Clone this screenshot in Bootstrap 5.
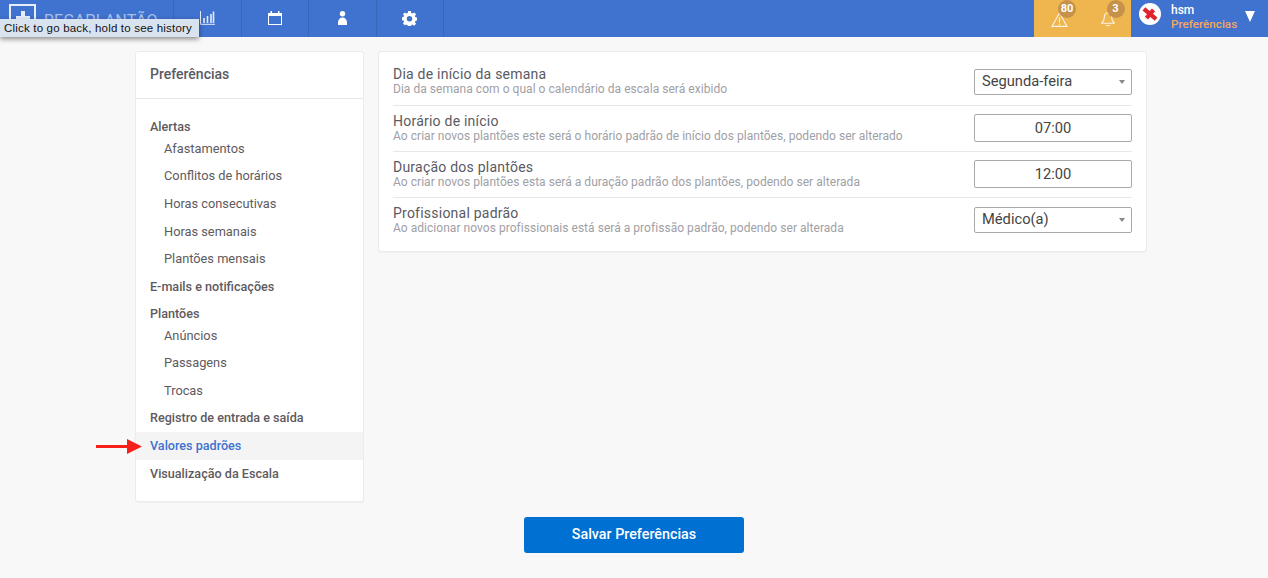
<!DOCTYPE html>
<html lang="pt-BR">
<head>
<meta charset="utf-8">
<title>Preferências</title>
<link href="https://cdn.jsdelivr.net/npm/bootstrap@5.3.0/dist/css/bootstrap.min.css" rel="stylesheet">
<style>
html,body{height:578px;overflow:hidden}
body{background:#f8f8f8;font-family:Roboto,"Liberation Sans",sans-serif;color:#5a5a62;position:relative}
.topbar{height:37px;background:#4072cf}
.brand-box{width:173px;height:37px;padding-left:9px;gap:8px;overflow:hidden;color:#a9c0ea;font-size:16px;letter-spacing:.25px;white-space:nowrap}
.brand-mark{width:27px;height:27px;border:2.5px solid #e8eef9;color:#fff;background:#4072cf;margin-top:-2px;flex:none}
.brand-text{font-weight:400;line-height:37px;padding-top:4px}
.top-item{width:67.5px;height:37px;border-left:1px solid #3866ba;color:#fff}
.top-item.last-sep{border-right:1px solid #3866ba;width:68px}
.top-item svg{margin-bottom:1px}
.alert-zone{width:97px;height:37px;background:#efb54e;position:relative}
.alert-cell{width:48.5px;position:relative}
.count-dot{position:absolute;top:0;width:18px;height:18px;border-radius:50%;background:#c6924a;color:#fff;font-size:11px;font-weight:700;line-height:18px;text-align:center}
.alert-glyph{position:absolute;top:12px;opacity:.85}
.user-zone{width:137px;height:37px;padding-left:8px;color:#fff}
.user-logo{width:22px;height:22px;flex:none;margin-bottom:9px}
.user-text{margin-left:10px;margin-bottom:2px}
.user-name{font-size:12px;font-weight:500;line-height:13px;color:#fff}
.user-sub{font-size:11.7px;font-weight:500;line-height:14px;color:#f5a85a}
.user-caret{width:0;height:0;border-left:5.5px solid transparent;border-right:5.5px solid transparent;border-top:11px solid #fff;margin-left:8px;margin-bottom:5px}
.back-tip{position:absolute;left:0;top:19px;width:199px;height:18px;background:#d9e3f0;color:#111;font-size:11.5px;line-height:18px;padding-left:4px;white-space:nowrap;font-family:"Liberation Sans",sans-serif;box-shadow:0 2px 5px rgba(0,0,0,.45);letter-spacing:.19px}
.page-wrap{width:1012px;margin:14px 0 0 135px;gap:14px}
.side-panel{width:229px;height:451px;background:#fff;border:1px solid #ebebeb;border-radius:3px;box-shadow:0 1px 1px rgba(0,0,0,.03);flex:none}
.side-title{height:47px;border-bottom:1px solid #e6e6e6;font-size:14px;font-weight:500;line-height:45px;padding-left:14px;color:#5a5a62;margin:0}
.side-list{padding:14.15px 0 0;margin:0;list-style:none}
.side-link{display:block;height:27.6px;line-height:27.6px;padding-left:14px;font-size:12.6px;font-weight:500;color:#5e5a5e;text-decoration:none;white-space:nowrap}
.side-link.sub{padding-left:28px;font-weight:400;font-size:12.8px}
.side-link.sub.first{margin-top:-6px}
.side-link.sub.first.later{margin-top:-6.3px}
.side-link.on{background:#f4f4f4;color:#4072cf}
.main-panel{width:769px;height:201px;background:#fff;border:1px solid #ebebeb;border-radius:3px;padding:8px 14px 0;box-shadow:0 1px 1px rgba(0,0,0,.03)}
.pref-row{height:46px;border-bottom:1px solid #e8e8e8;padding-bottom:2px}
.pref-row:first-child{height:46px}
.pref-row:first-child .pref-copy{margin-bottom:2px}
.pref-row:last-child{border-bottom:0}
.pref-name{font-size:14px;line-height:16px;color:#5a5a62;letter-spacing:.23px}
.pref-help{font-size:12px;line-height:14px;color:#a0a0a6;letter-spacing:.04px}
.pref-box{width:158px;height:28px;flex:none;border:1px solid #a9a9a9;border-radius:2px;font-size:14.7px;color:#444;padding:0 7px;box-shadow:none;font-family:Roboto,sans-serif;line-height:1.2}
.pref-box:focus{border-color:#a9a9a9;box-shadow:none}
select.pref-box{height:26px;background-size:6px 4px;background-position:right 6px center;background-image:url("data:image/svg+xml,%3Csvg xmlns='http://www.w3.org/2000/svg' viewBox='0 0 6 4'%3E%3Cpath fill='%23888' d='M0 0h6L3 4z'/%3E%3C/svg%3E")}
.save-btn{width:220px;height:36px;background:#0070d2;border:0;border-radius:3px;color:#fff;font-size:14.3px;font-weight:500;margin:15px 0 0 524px;display:block;padding:0 0 1px}
.save-btn:hover{background:#0070d2;color:#fff}
.red-arrow{position:absolute;left:96px;top:439px}
</style>
</head>
<body>
<header class="topbar d-flex align-items-center">
  <div class="brand-box d-flex align-items-center">
    <span class="brand-mark d-flex align-items-center justify-content-center">
      <svg width="14" height="14" viewBox="0 0 14 14"><path fill="#e8eef9" d="M5 0h4v5h5v4H9v5H5V9H0V5h5z"/></svg>
    </span>
    <span class="brand-text">REGAPLANTÃO</span>
  </div>
  <a class="top-item d-flex align-items-center justify-content-center" href="#" aria-label="Relatórios">
    <svg width="15" height="14" viewBox="0 0 15 14"><path fill="none" stroke="#e4ebf9" stroke-width="1" d="M.5 0v13.300H15"/><path fill="none" stroke="#e4ebf9" stroke-width="1.600" d="M4.500 7v5M8 5v7M11.500 3v9M14 .5V12" transform="translate(-.5 0)"/></svg>
  </a>
  <a class="top-item d-flex align-items-center justify-content-center" href="#" aria-label="Calendário">
    <svg width="14" height="14" viewBox="0 0 14 14"><path fill="#fff" fill-rule="evenodd" d="M0 2h2.500V0h1.500v2h6V0h1.500v2H14v12H0zM1 5v8h12V5z"/></svg>
  </a>
  <a class="top-item d-flex align-items-center justify-content-center" href="#" aria-label="Profissionais">
    <svg width="9" height="14" viewBox="0 0 9 14"><circle cx="4.500" cy="2.800" r="2.700" fill="#fff"/><path fill="#fff" d="M0 14v-2.500C0 8.500 2 6.500 4.500 6.500S9 8.500 9 11.500V14z"/></svg>
  </a>
  <a class="top-item last-sep d-flex align-items-center justify-content-center" href="#" aria-label="Configurações">
    <svg width="15" height="15" viewBox="0 0 16 16"><path fill="#fff" fill-rule="evenodd" d="M6.500 0h3l.4 2.100 1.400.6L13 1.500l2 2-1.200 1.800.6 1.400 2.100.4v3l-2.100.4-.6 1.400 1.200 1.800-2 2-1.800-1.200-1.400.6-.4 2.100h-3l-.4-2.100-1.400-.6L3 15.300l-2-2 1.200-1.800-.6-1.400L-.5 9.700v-3l2.100-.4.6-1.400L1 3.500l2-2 1.700 1.200 1.400-.6zM8 5.300a2.900 2.900 0 1 0 0 5.800 2.900 2.900 0 0 0 0-5.800z"/></svg>
  </a>
  <div class="alert-zone d-flex ms-auto">
    <div class="alert-cell">
      <svg class="alert-glyph" style="left:17px" width="17" height="15" viewBox="0 0 17 15"><path fill="none" stroke="#fff" stroke-width="1.100" d="M8.500 1 16 14.400H1zM8.500 5.500v5M8.500 11.500v1.500"/></svg>
      <span class="count-dot" style="left:24px">80</span>
    </div>
    <div class="alert-cell">
      <svg class="alert-glyph" style="left:18.500px" width="14" height="15" viewBox="0 0 14 15"><path fill="none" stroke="#fff" stroke-width="1.100" d="M7 .8C4.200.8 3.300 3.200 3.300 5.500c0 2.800-1 4.300-2.500 5.700h12.400c-1.500-1.400-2.500-2.900-2.500-5.700C10.700 3.200 9.800.8 7 .8zM5 13c.5 1 3.500 1 4 0"/></svg>
      <span class="count-dot" style="left:24px">3</span>
    </div>
  </div>
  <div class="user-zone d-flex align-items-center">
    <svg class="user-logo" viewBox="0 0 22 22"><circle cx="11" cy="11" r="11" fill="#fff"/><g transform="rotate(40 11 11)" fill="#e0242b"><rect x="3" y="8.900" width="16" height="4.200"/><rect x="8.900" y="5.500" width="4.200" height="11"/></g></svg>
    <div class="user-text">
      <div class="user-name">hsm</div>
      <div class="user-sub">Preferências</div>
    </div>
    <span class="user-caret"></span>
  </div>
</header>
<div class="back-tip">Click to go back, hold to see history</div>

<main class="page-wrap d-flex align-items-start">
  <aside class="side-panel">
    <h2 class="side-title">Preferências</h2>
    <ul class="side-list">
      <li><a class="side-link" href="#">Alertas</a></li>
      <li><a class="side-link sub first" href="#">Afastamentos</a></li>
      <li><a class="side-link sub" href="#">Conflitos de horários</a></li>
      <li><a class="side-link sub" href="#">Horas consecutivas</a></li>
      <li><a class="side-link sub" href="#">Horas semanais</a></li>
      <li><a class="side-link sub" href="#">Plantões mensais</a></li>
      <li><a class="side-link" href="#">E-mails e notificações</a></li>
      <li><a class="side-link" href="#">Plantões</a></li>
      <li><a class="side-link sub first later" href="#">Anúncios</a></li>
      <li><a class="side-link sub" href="#">Passagens</a></li>
      <li><a class="side-link sub" href="#">Trocas</a></li>
      <li><a class="side-link" href="#">Registro de entrada e saída</a></li>
      <li><a class="side-link on" href="#">Valores padrões</a></li>
      <li><a class="side-link" href="#">Visualização da Escala</a></li>
    </ul>
  </aside>
  <section class="main-panel">
    <div class="pref-row d-flex align-items-center justify-content-between">
      <div class="pref-copy"><div class="pref-name">Dia de início da semana</div><div class="pref-help">Dia da semana com o qual o calendário da escala será exibido</div></div>
      <select class="form-select pref-box" aria-label="Dia de início da semana"><option>Segunda-feira</option></select>
    </div>
    <div class="pref-row d-flex align-items-center justify-content-between">
      <div class="pref-copy"><div class="pref-name">Horário de início</div><div class="pref-help">Ao criar novos plantões este será o horário padrão de início dos plantões, podendo ser alterado</div></div>
      <input class="form-control pref-box text-center" value="07:00" aria-label="Horário de início">
    </div>
    <div class="pref-row d-flex align-items-center justify-content-between">
      <div class="pref-copy"><div class="pref-name">Duração dos plantões</div><div class="pref-help">Ao criar novos plantões esta será a duração padrão dos plantões, podendo ser alterada</div></div>
      <input class="form-control pref-box text-center" value="12:00" aria-label="Duração dos plantões">
    </div>
    <div class="pref-row d-flex align-items-center justify-content-between">
      <div class="pref-copy"><div class="pref-name">Profissional padrão</div><div class="pref-help">Ao adicionar novos profissionais está será a profissão padrão, podendo ser alterada</div></div>
      <select class="form-select pref-box" aria-label="Profissional padrão"><option>Médico(a)</option></select>
    </div>
  </section>
</main>
<button class="btn save-btn" type="button">Salvar Preferências</button>
<svg class="red-arrow" width="46" height="15" viewBox="0 0 46 15"><path fill="#f5201a" d="M0 6h31V0l15 7.500L31 15V9H0z"/></svg>
</body>
</html>
